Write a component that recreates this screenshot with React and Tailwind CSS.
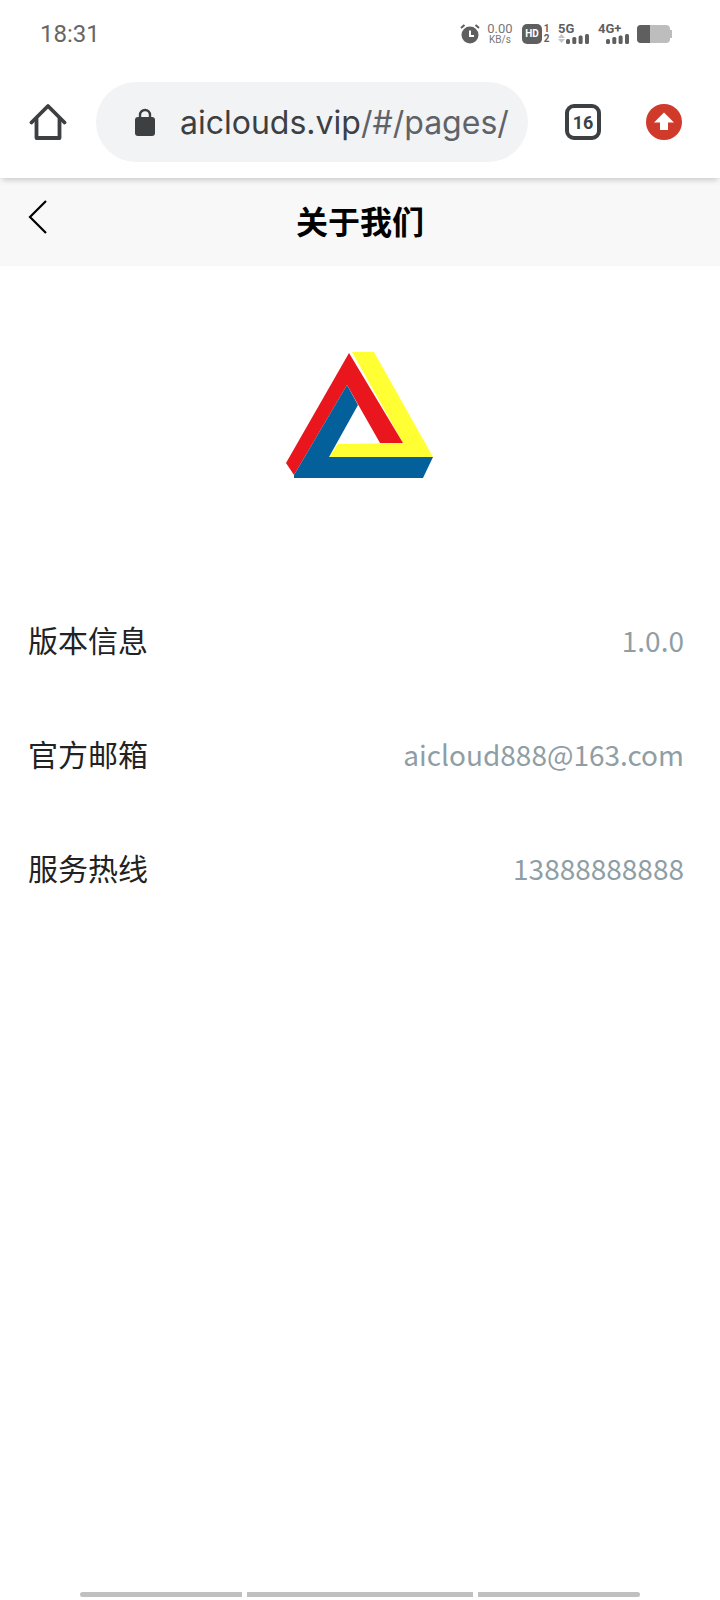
import React from 'react';

const rows = [
  { label: '版本信息', value: '1.0.0' },
  { label: '官方邮箱', value: 'aicloud888@163.com' },
  { label: '服务热线', value: '13888888888' },
];

const SignalBars = () => (
  <svg width="23" height="10" viewBox="0 0 23 10" fill="#5f5f5f">
    <rect x="0" y="5" width="4" height="5" rx="1.500" />
    <rect x="6.300" y="3" width="4" height="7" rx="1.500" />
    <rect x="12.600" y="1.500" width="4" height="8.500" rx="1.500" />
    <rect x="19" y="0" width="4" height="10" rx="1.500" />
  </svg>
);

const StatusBar = () => (
  <div className="h-[66px] flex items-center justify-between pl-[40px] pr-[48px] bg-white text-[#666]">
    <span className="text-[24px] leading-none mt-[2px] font-['Roboto',sans-serif]">18:31</span>
    <div className="flex items-center h-[20px] mt-[1px] font-['Roboto',sans-serif]">
      <svg width="20" height="20" viewBox="0 0 20 20" className="mr-[7px]">
        <circle cx="10" cy="11" r="8.500" fill="#5f5f5f" />
        <path d="M10 6.500V12h4" stroke="#fff" strokeWidth="2" fill="none" />
        <path d="M1 4l3.500-3M19 4l-3.500-3" stroke="#5f5f5f" strokeWidth="2" />
      </svg>
      <div className="w-[26px] flex flex-col items-center text-[#777] mr-[9px]">
        <span className="text-[13px] leading-[12px]">0.00</span>
        <span className="text-[10px] leading-[10px]">KB/s</span>
      </div>
      <div className="w-[20px] h-[20px] rounded-[5px] bg-[#5f5f5f] text-white text-[10px] font-bold leading-[20px] text-center">HD</div>
      <div className="flex flex-col items-center ml-[1px] mr-[8px] w-[7px] text-[10px] font-bold leading-[10px] text-[#5f5f5f]">
        <span>1</span>
        <span>2</span>
      </div>
      <div className="flex flex-col mr-[9px] w-[31px] text-[#5f5f5f]">
        <span className="text-[13px] font-bold leading-[10px]">5G</span>
        <div className="flex justify-between items-center">
          <svg width="7" height="9" viewBox="0 0 7 9" fill="#c4c4c4">
            <path d="M3.500 0 7 4H0zM0 5h7L3.500 9z" />
          </svg>
          <SignalBars />
        </div>
      </div>
      <div className="flex flex-col mr-[8px] w-[31px] text-[#5f5f5f]">
        <span className="text-[13px] font-bold leading-[10px]">4G+</span>
        <div className="flex justify-end"><SignalBars /></div>
      </div>
      <div className="flex items-center">
        <div className="w-[33px] h-[18px] rounded-[4px] bg-[#bdbdbd] overflow-hidden">
          <div className="w-[13px] h-full bg-[#5f5f5f]" />
        </div>
        <div className="w-[2px] h-[8px] bg-[#bdbdbd]" />
      </div>
    </div>
  </div>
);

const Toolbar = () => (
  <div className="relative z-10 h-[112px] flex items-start bg-white shadow-[0_4px_6px_-2px_rgba(0,0,0,0.2)]">
    <div className="w-[96px] h-[80px] mt-[16px] flex items-center justify-center">
      <svg width="38" height="38" viewBox="0 0 38 38" fill="none" stroke="#3c4043" strokeWidth="3.800" strokeLinejoin="round" strokeLinecap="round">
        <path d="M2.500 19.500 19 3l16.500 16.500" />
        <path d="M7.500 15.500V35h23V15.500" />
      </svg>
    </div>
    <div className="w-[432px] h-[80px] mt-[16px] rounded-full bg-[#f2f3f5] flex items-center pl-[38px] overflow-hidden">
      <svg width="22" height="32" viewBox="0 0 22 32" className="shrink-0">
        <path d="M6 13V9a5 5 0 0 1 10 0v4" fill="none" stroke="#3c4043" strokeWidth="2.400" />
        <rect x="1" y="11" width="20" height="19" rx="3" fill="#3c4043" />
      </svg>
      <span className="ml-[24px] mt-[2px] text-[32px] leading-none whitespace-nowrap font-['Inter','Roboto',sans-serif] text-[#3c4043]">
        aiclouds.vip<span className="text-[#5f6368]">/#/pages/</span>
      </span>
    </div>
    <div className="w-[88px] h-[80px] mt-[16px] flex items-center justify-center pl-[22px]">
      <div className="w-[36px] h-[36px] shrink-0 rounded-[9px] border-[4px] border-[#3c4043] flex items-center justify-center text-[18px] font-bold text-[#3c4043] font-['Roboto',sans-serif]">16</div>
    </div>
    <div className="flex-1 h-[80px] mt-[16px] flex items-center pl-[30px]">
      <svg width="36" height="36" viewBox="0 0 36 36">
        <circle cx="18" cy="18" r="18" fill="#cf3a2b" />
        <path d="M18 8.500 28 18.500h-6V26h-8v-7.500H8z" fill="#fff" />
      </svg>
    </div>
  </div>
);

const Logo = () => (
  <svg width="160" height="140" viewBox="0 0 160 140">
    <polygon points="72,7 94,7 153,112 49,112 58,99 123,98" fill="#ffff33" />
    <polygon points="69,8 123,98 100,98 67,40 14,130 6,118" fill="#e9161d" />
    <polygon points="67,40 78,60 49,112 153,112 143,133 14,133 14,130" fill="#03609a" />
  </svg>
);

export default function App() {
  return (
    <div className="w-[720px] h-[1600px] relative overflow-hidden bg-white font-['Noto_Sans_CJK_SC','Noto_Sans',sans-serif]">
      <StatusBar />
      <Toolbar />

      <div className="h-[88px] bg-[#f8f8f8] relative flex items-center justify-center">
        <svg width="22" height="36" viewBox="0 0 22 36" fill="none" stroke="#000" strokeWidth="2.200" className="absolute left-[27px] top-[21px]">
          <path d="M19 2 3 18l16 16" />
        </svg>
        <span className="text-[32px] font-bold text-black leading-none mt-[-5px]">关于我们</span>
      </div>

      <div className="flex justify-center pt-[79px]">
        <Logo />
      </div>

      <div className="mt-[97px] pl-[28px] pr-[36px]">
        {rows.map((row) => (
          <div key={row.label} className="h-[114px] flex items-center justify-between">
            <span className="text-[30px] text-[#222] leading-none">{row.label}</span>
            <span className="text-[28px] text-[#8f9ea5] leading-none mt-[2px]">{row.value}</span>
          </div>
        ))}
      </div>

      <div className="absolute bottom-[3px] left-[80px] flex gap-[5px] h-[5px]">
        <div className="w-[162px] bg-[#c0c0c0] rounded-l-full" />
        <div className="w-[226px] bg-[#c0c0c0]" />
        <div className="w-[162px] bg-[#c0c0c0] rounded-r-full" />
      </div>
    </div>
  );
}
